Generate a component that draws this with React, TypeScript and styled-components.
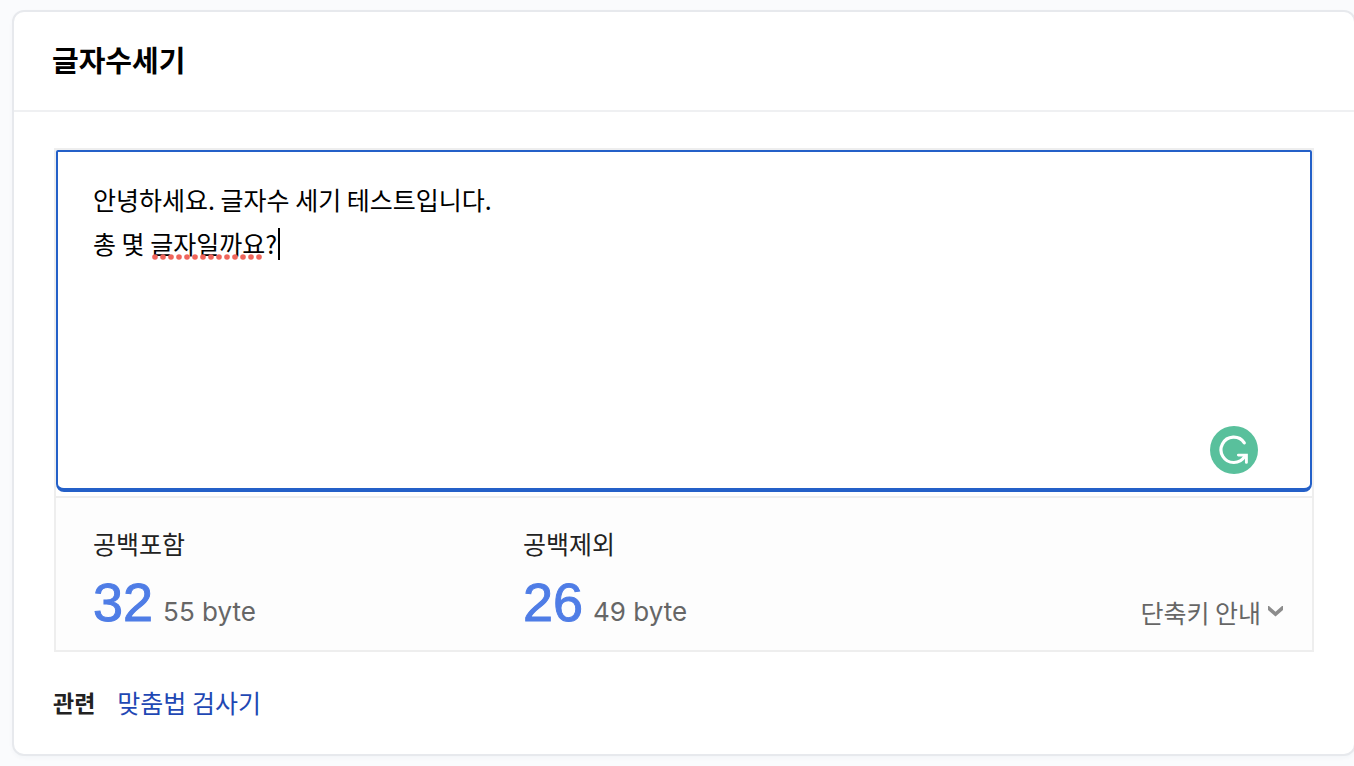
import React, { useState } from "react";
import styled, { createGlobalStyle } from "styled-components";

const GlobalStyle = createGlobalStyle`
  *, *::before, *::after { box-sizing: border-box; }
  body {
    margin: 0;
    background: #fafbfd;
    overflow-x: hidden;
    font-family: "Noto Sans CJK KR", sans-serif;
    font-size: 25px;
    line-height: 36px;
    color: #222;
  }
`;

const Page = styled.main`
  padding: 10px 0 10px 12px;
`;

const Card = styled.section`
  margin-right: -2px;
  background: #fff;
  border: 2px solid #e7e9ed;
  border-radius: 12px;
  box-shadow: 0 2px 4px rgba(30, 50, 90, 0.03);
`;

const CardHeader = styled.header`
  padding: 26px 38px 30px;
  border-bottom: 2px solid #eff0f2;
`;

const Title = styled.h1`
  margin: 0;
  font-size: 29px;
  line-height: 42px;
  font-weight: 700;
  color: #000;
`;

const CardBody = styled.div`
  padding: 36px 40px 34px;
`;

const Counter = styled.div`
  border: 2px solid #eee;
`;

const Editor = styled.div`
  position: relative;
  padding-bottom: 4px;
  border-bottom: 2px solid #eee;
`;

const TextArea = styled.textarea`
  display: block;
  width: 100%;
  height: 342px;
  padding: 25px 35px;
  border: 2px solid #2460c8;
  border-bottom-width: 4px;
  border-radius: 2px 2px 8px 8px;
  outline: none;
  resize: none;
  background: #fff;
  color: #000;
  caret-color: transparent;
  font: inherit;
  line-height: 44px;
`;

const SpellingMark = styled.svg`
  position: absolute;
  left: 96px;
  top: 104px;
  pointer-events: none;
`;

const Caret = styled.span`
  position: absolute;
  left: 222px;
  top: 78px;
  width: 2px;
  height: 32px;
  background: #000;
  pointer-events: none;
`;

const AssistantButton = styled.button`
  position: absolute;
  right: 54px;
  bottom: 22px;
  width: 48px;
  height: 48px;
  padding: 0;
  border: 0;
  border-radius: 50%;
  background: #59c09c;

  svg { display: block; }
`;

const Summary = styled.div`
  display: flex;
  align-items: flex-end;
  padding: 27px 29px 20px 37px;
  background: #fdfdfd;
`;

const Stats = styled.dl`
  display: flex;
  flex: 1;
  margin: 0;
`;

const Stat = styled.div`
  width: 430px;
`;

const StatLabel = styled.dt`
  line-height: 36px;
`;

const StatValue = styled.dd`
  display: flex;
  align-items: baseline;
  gap: 10px;
  margin: 0;
  padding-top: 13px;
`;

const Count = styled.strong`
  font-family: "Liberation Sans", sans-serif;
  font-size: 54px;
  line-height: 56px;
  font-weight: 400;
  color: #4f7de6;
  -webkit-text-stroke: 1px #4f7de6;
`;

const Bytes = styled.span`
  font-family: Inter, sans-serif;
  font-size: 26px;
  line-height: 36px;
  color: #666;
`;

const ShortcutButton = styled.button`
  display: flex;
  align-items: center;
  gap: 7px;
  padding: 0;
  border: 0;
  background: none;
  color: #666;
  font: inherit;
`;

const Related = styled.div`
  display: flex;
  gap: 22px;
  margin: 32px 0 0 -1px;
`;

const RelatedTitle = styled.strong`
  font-size: 23px;
  font-weight: 700;
`;

const RelatedLink = styled.a`
  color: #1f48b4;
  text-decoration: none;
`;

const stats = [
  { label: "공백포함", count: 32, bytes: 55 },
  { label: "공백제외", count: 26, bytes: 49 },
];

const dots = Array.from({ length: 14 }, (_, i) => 3 + i * 8);

export default function App() {
  const [text, setText] = useState(
    "안녕하세요. 글자수 세기 테스트입니다.\n총 몇 글자일까요?"
  );

  return (
    <>
      <GlobalStyle />
      <Page>
        <Card>
          <CardHeader>
            <Title>글자수세기</Title>
          </CardHeader>
          <CardBody>
            <Counter>
              <Editor>
                <TextArea
                  aria-label="글자수세기"
                  spellCheck={false}
                  value={text}
                  onChange={(e) => setText(e.target.value)}
                />
                <SpellingMark width="112" height="6" aria-hidden="true">
                  {dots.map((x) => (
                    <circle key={x} cx={x} cy="3" r="2.8" fill="#f0655b" />
                  ))}
                </SpellingMark>
                <Caret />
                <AssistantButton type="button" aria-label="Grammarly">
                  <svg
                    width="48"
                    height="48"
                    viewBox="0 0 48 48"
                    fill="none"
                    stroke="#fff"
                    strokeWidth="3.2"
                    strokeLinecap="round"
                  >
                    <path d="M34.3 16.8A12.7 12.7 0 1 0 24 36.5C28.8 36.5 32.4 34.2 35 30.2" />
                    <path d="M28.4 29.1H36.4V36.4" strokeWidth="2.9" strokeLinejoin="miter" />
                  </svg>
                </AssistantButton>
              </Editor>
              <Summary>
                <Stats>
                  {stats.map((s) => (
                    <Stat key={s.label}>
                      <StatLabel>{s.label}</StatLabel>
                      <StatValue>
                        <Count>{s.count}</Count>
                        <Bytes>{s.bytes} byte</Bytes>
                      </StatValue>
                    </Stat>
                  ))}
                </Stats>
                <ShortcutButton type="button">
                  단축키 안내
                  <svg width="15" height="12" viewBox="0 0 15 12" aria-hidden="true">
                    <path d="M0 0V4L7.5 10.6L15 4V0H14L7.5 5.8L1 0Z" fill="#8c8c8c" />
                  </svg>
                </ShortcutButton>
              </Summary>
            </Counter>
            <Related>
              <RelatedTitle>관련</RelatedTitle>
              <RelatedLink href="#spelling">맞춤법 검사기</RelatedLink>
            </Related>
          </CardBody>
        </Card>
      </Page>
    </>
  );
}
